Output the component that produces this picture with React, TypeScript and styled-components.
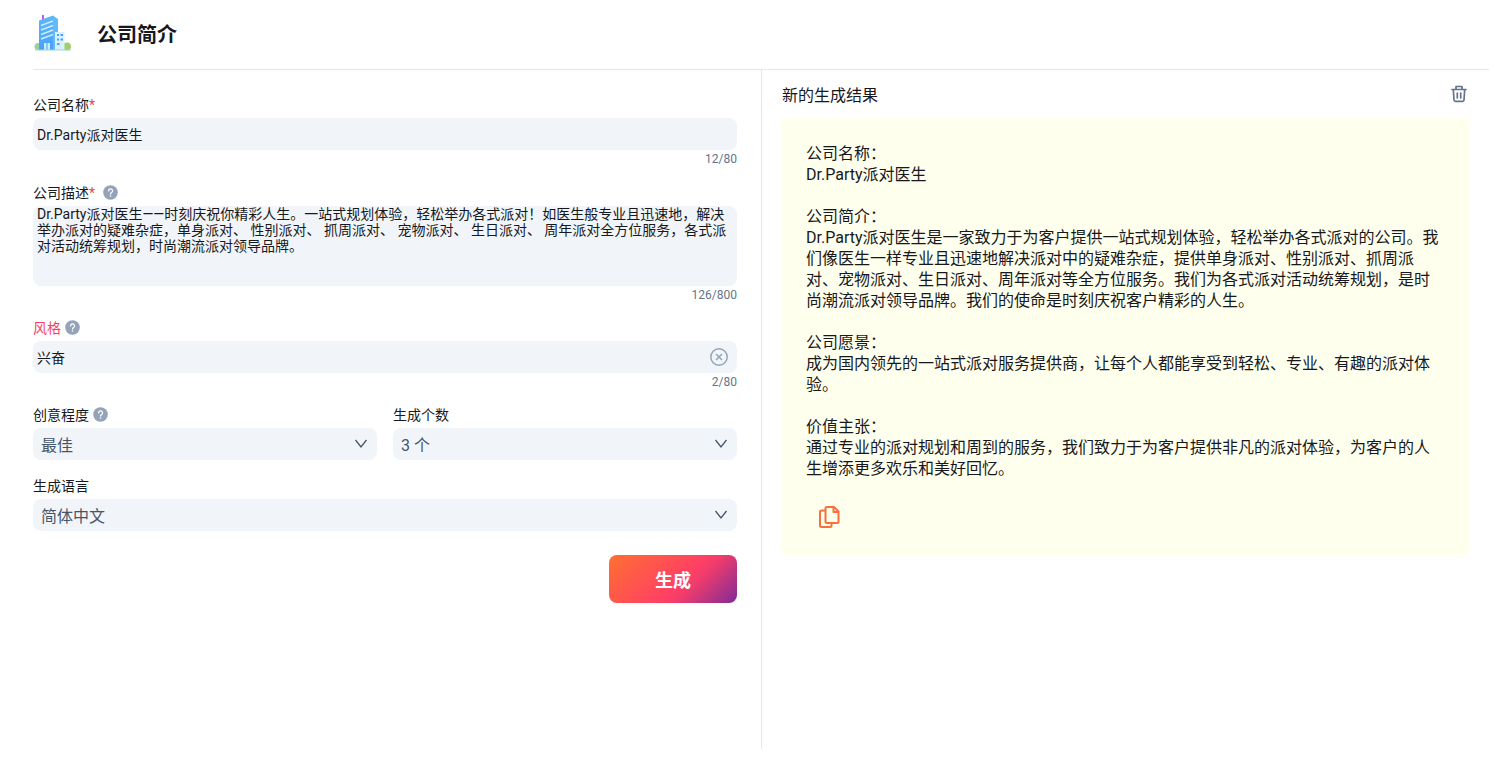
import React from "react";
import styled, { createGlobalStyle } from "styled-components";

const GlobalStyle = createGlobalStyle`
  *, *::before, *::after { box-sizing: border-box; }
  body {
    margin: 0;
    background: #fff;
    color: #16181d;
    font-family: Roboto, "Noto Sans CJK SC", sans-serif;
    font-size: 14px;
  }
  button, input, select, textarea { font: inherit; color: inherit; }
`;

const Page = styled.div`
  display: flex;
  flex-direction: column;
  min-height: 100vh;
  padding: 0 12px 9px 33px;
`;

const Header = styled.header`
  display: flex;
  align-items: center;
  gap: 24px;
  height: 70px;
  border-bottom: 1px solid #e5e7eb;
`;

const Title = styled.h1`
  margin: 0;
  font-size: 20px;
  line-height: 28px;
  font-weight: 700;
`;

const Columns = styled.main`
  display: grid;
  grid-template-columns: 1fr 1fr;
  flex: 1;
`;

const Form = styled.form`
  display: flex;
  flex-direction: column;
  gap: 11px;
  padding: 20px 24px 0 0;
`;

const RequiredFields = styled.div`
  display: flex;
  flex-direction: column;
  gap: 12px;
`;

const Field = styled.div`
  display: flex;
  flex-direction: column;
`;

const FieldPair = styled.div`
  display: grid;
  grid-template-columns: 1fr 1fr;
  gap: 16px;
`;

const LabelRow = styled.div<{ $gap?: number }>`
  display: flex;
  align-items: center;
  gap: ${(p) => p.$gap ?? 4}px;
  height: 28px;
  padding-top: 2px;
`;

const Label = styled.label<{ $accent?: boolean }>`
  line-height: 20px;
  color: ${(p) => (p.$accent ? "#f43f5e" : "inherit")};
`;

const Star = styled.span`
  color: #ef4444;
`;

const Control = styled.div`
  position: relative;
  display: flex;
`;

const TextInput = styled.input`
  width: 100%;
  height: 32px;
  padding: 0 4px;
  border: 0;
  border-radius: 8px;
  background: #f1f5f9;
`;

const TextArea = styled.textarea`
  width: 100%;
  height: 80px;
  padding: 0 4px;
  border: 0;
  border-radius: 8px;
  background: #f1f5f9;
  line-height: 16px;
  resize: none;
`;

const Select = styled.select`
  width: 100%;
  height: 32px;
  padding: 2px 32px 0 8px;
  border: 0;
  border-radius: 8px;
  background: #f1f5f9;
  color: #475569;
  font-size: 16px;
  appearance: none;
`;

const Chevron = styled.svg`
  position: absolute;
  top: 8px;
  right: 8px;
  pointer-events: none;
`;

const Counter = styled.div`
  height: 16px;
  font-size: 12px;
  line-height: 18px;
  text-align: right;
  color: #64748b;
`;

const IconButton = styled.button`
  display: flex;
  align-items: center;
  justify-content: center;
  padding: 0;
  border: 0;
  background: none;
  cursor: pointer;
`;

const HelpButton = styled(IconButton)`
  width: 16px;
  height: 16px;
`;

const ClearButton = styled(IconButton)`
  position: absolute;
  top: 6px;
  right: 8px;
  width: 20px;
  height: 20px;
`;

const CopyButton = styled(IconButton)`
  width: 46px;
  height: 46px;
  margin-top: 15px;
`;

const SubmitButton = styled.button`
  align-self: flex-end;
  width: 128px;
  height: 48px;
  margin-top: 13px;
  border: 0;
  border-radius: 8px;
  background: linear-gradient(135deg, #ff6f32 0%, #ff4163 55%, #f03c6c 65%, #7f2b98 100%);
  color: #fff;
  font-size: 18px;
  font-weight: 700;
  cursor: pointer;
`;

const Results = styled.section`
  padding: 0 20px;
  border-left: 1px solid #e5e7eb;
`;

const ResultsHeader = styled.div`
  display: flex;
  align-items: center;
  justify-content: space-between;
  height: 48px;
`;

const ResultsTitle = styled.h2`
  margin: 0;
  padding-top: 3px;
  font-size: 16px;
  line-height: 24px;
  font-weight: 400;
`;

const Card = styled.article`
  padding: 25px 24px 15px;
  border-radius: 4px;
  background: #ffffed;
`;

const ResultText = styled.p`
  margin: 0;
  font-size: 16px;
  line-height: 21px;
  white-space: pre-wrap;
`;

const resultText = `公司名称：
Dr.Party派对医生

公司简介：
Dr.Party派对医生是一家致力于为客户提供一站式规划体验，轻松举办各式派对的公司。我们像医生一样专业且迅速地解决派对中的疑难杂症，提供单身派对、性别派对、抓周派对、宠物派对、生日派对、周年派对等全方位服务。我们为各式派对活动统筹规划，是时尚潮流派对领导品牌。我们的使命是时刻庆祝客户精彩的人生。

公司愿景：
成为国内领先的一站式派对服务提供商，让每个人都能享受到轻松、专业、有趣的派对体验。

价值主张：
通过专业的派对规划和周到的服务，我们致力于为客户提供非凡的派对体验，为客户的人生增添更多欢乐和美好回忆。`;

const description =
  "Dr.Party派对医生——时刻庆祝你精彩人生。一站式规划体验，轻松举办各式派对！如医生般专业且迅速地，解决举办派对的疑难杂症，单身派对、 性别派对、 抓周派对、 宠物派对、 生日派对、 周年派对全方位服务，各式派对活动统筹规划，时尚潮流派对领导品牌。";

function BuildingIcon() {
  return (
    <svg width="40" height="40" viewBox="0 0 40 40" aria-hidden="true">
      <defs>
        <linearGradient id="tower" x1="0" y1="0" x2="0" y2="1">
          <stop offset="0" stopColor="#5cb8fb" />
          <stop offset="1" stopColor="#4aa0fa" />
        </linearGradient>
      </defs>
      <rect x="9" y="0" width="2" height="5" fill="#b45cf0" />
      <circle cx="5" cy="31.500" r="3.500" fill="#9bd0a0" />
      <circle cx="34" cy="31.500" r="4" fill="#a3cf6a" />
      <path d="M6 5.500 20 .5V35H6z" fill="url(#tower)" />
      <path d="m20 .5 5 3.500v31h-5z" fill="#64b9f8" />
      <path d="m8 10.500 12-4.500M8 15l12-4.500M8 19.500 20 15M8 24l12-4.500" stroke="#c9ecff" strokeWidth="1.500" />
      <path d="M11 28h6v7h-6z" fill="#c9ecff" />
      <path d="M14 28v7" stroke="#4aa0fa" />
      <path d="M22 17h9.500v18H22z" fill="#d9f1ff" />
      <path d="M24 20h2m1.500 0h2.500M24 24.500h2m1.500 0h2.500M24 29h2.500" stroke="#4f9df6" strokeWidth="1.800" />
      <path d="M2 35h36" stroke="#9fd4e0" />
    </svg>
  );
}

function HelpIcon() {
  return (
    <svg width="16" height="16" viewBox="0 0 16 16" aria-hidden="true">
      <circle cx="7.500" cy="7.500" r="7.300" fill="#94a3b8" />
      <path d="M5.600 5.900a2 2 0 1 1 3 1.700c-.8.400-1.100.7-1.100 1.400" fill="none" stroke="#fff" strokeWidth="1.200" strokeLinecap="round" />
      <circle cx="7.500" cy="11" r=".8" fill="#fff" />
    </svg>
  );
}

function ChevronIcon() {
  return (
    <Chevron width="16" height="16" viewBox="0 0 16 16" aria-hidden="true">
      <path d="m2.500 4 5.500 7 5.500-7" fill="none" stroke="#475569" strokeWidth="1.300" />
    </Chevron>
  );
}

function Help({ topic }: { topic: string }) {
  return (
    <HelpButton type="button" aria-label={topic}>
      <HelpIcon />
    </HelpButton>
  );
}

export default function App() {
  return (
    <>
      <GlobalStyle />
      <Page>
        <Header>
          <BuildingIcon />
          <Title>公司简介</Title>
        </Header>
        <Columns>
          <Form onSubmit={(e) => e.preventDefault()}>
            <RequiredFields>
              <Field>
                <LabelRow>
                  <Label htmlFor="name">公司名称<Star>*</Star></Label>
                </LabelRow>
                <TextInput id="name" defaultValue="Dr.Party派对医生" />
                <Counter>12/80</Counter>
              </Field>
              <Field>
                <LabelRow $gap={8}>
                  <Label htmlFor="description">公司描述<Star>*</Star></Label>
                  <Help topic="公司描述" />
                </LabelRow>
                <TextArea id="description" defaultValue={description} />
                <Counter>126/800</Counter>
              </Field>
            </RequiredFields>
            <Field>
              <LabelRow>
                <Label htmlFor="style" $accent>风格</Label>
                <Help topic="风格" />
              </LabelRow>
              <Control>
                <TextInput id="style" defaultValue="兴奋" />
                <ClearButton type="button" aria-label="清除">
                  <svg width="20" height="20" viewBox="0 0 20 20" fill="none" stroke="#94a3b8" strokeWidth="1.500" aria-hidden="true">
                    <circle cx="10" cy="10" r="8.200" />
                    <path d="m7 7 6 6m0-6-6 6" />
                  </svg>
                </ClearButton>
              </Control>
              <Counter>2/80</Counter>
            </Field>
            <FieldPair>
              <Field>
                <LabelRow>
                  <Label htmlFor="creativity">创意程度</Label>
                  <Help topic="创意程度" />
                </LabelRow>
                <Control>
                  <Select id="creativity"><option>最佳</option></Select>
                  <ChevronIcon />
                </Control>
              </Field>
              <Field>
                <LabelRow>
                  <Label htmlFor="count">生成个数</Label>
                </LabelRow>
                <Control>
                  <Select id="count"><option>3 个</option></Select>
                  <ChevronIcon />
                </Control>
              </Field>
            </FieldPair>
            <Field>
              <LabelRow>
                <Label htmlFor="language">生成语言</Label>
              </LabelRow>
              <Control>
                <Select id="language"><option>简体中文</option></Select>
                <ChevronIcon />
              </Control>
            </Field>
            <SubmitButton type="submit">生成</SubmitButton>
          </Form>
          <Results>
            <ResultsHeader>
              <ResultsTitle>新的生成结果</ResultsTitle>
              <IconButton type="button" aria-label="删除">
                <svg width="20" height="20" viewBox="0 0 20 20" fill="none" stroke="#64748b" strokeWidth="1.700" strokeLinejoin="round" strokeLinecap="round" aria-hidden="true">
                  <path d="M3 5.500h14M7 5.500V2.500h6v3M4.300 5.500l.7 10.500q.1 1.300 1.500 1.300h7q1.400 0 1.500-1.300l.7-10.500M8.300 9v5M11.700 9v5" />
                </svg>
              </IconButton>
            </ResultsHeader>
            <Card>
              <ResultText>{resultText}</ResultText>
              <CopyButton type="button" aria-label="复制">
                <svg width="24" height="24" viewBox="0 0 24 24" fill="none" stroke="#f9703e" strokeWidth="2" strokeLinejoin="round" aria-hidden="true">
                  <path d="M8.500 5.500H4.500q-1.500 0-1.500 1.500v13.500q0 1.500 1.500 1.500h8.500q1.500 0 1.500-1.500V18" />
                  <path d="M10 2h7l4.500 4.500V16.500q0 1.500-1.500 1.500H10q-1.500 0-1.500-1.500V3.500Q8.500 2 10 2z" />
                  <path d="M16.500 2v5h5" />
                </svg>
              </CopyButton>
            </Card>
          </Results>
        </Columns>
      </Page>
    </>
  );
}
